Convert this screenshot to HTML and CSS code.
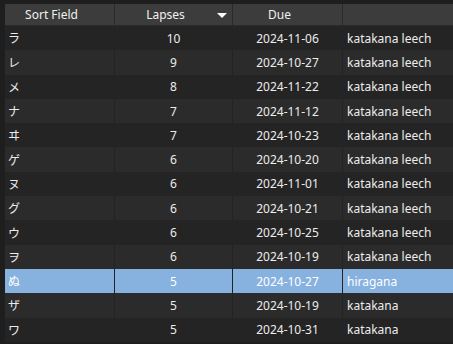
FILE: index.html
```html
<!DOCTYPE html>
<html lang="ja">
<head>
  <meta charset="UTF-8" />
  <title>Browse</title>
  <link rel="stylesheet" href="styles.css">
</head>
<body>
  <div class="grid" role="table">
    <div class="row head" role="row">
      <div class="cell c1">Sort Field</div>
      <div class="cell c2 sorted">Lapses</div>
      <div class="cell c3">Due</div>
      <div class="cell c4"></div>
    </div>
    <div class="row"><div class="cell c1">ラ</div><div class="cell c2">10</div><div class="cell c3">2024-11-06</div><div class="cell c4">katakana leech</div></div>
    <div class="row alt"><div class="cell c1">レ</div><div class="cell c2">9</div><div class="cell c3">2024-10-27</div><div class="cell c4">katakana leech</div></div>
    <div class="row"><div class="cell c1">メ</div><div class="cell c2">8</div><div class="cell c3">2024-11-22</div><div class="cell c4">katakana leech</div></div>
    <div class="row alt"><div class="cell c1">ナ</div><div class="cell c2">7</div><div class="cell c3">2024-11-12</div><div class="cell c4">katakana leech</div></div>
    <div class="row"><div class="cell c1">ヰ</div><div class="cell c2">7</div><div class="cell c3">2024-10-23</div><div class="cell c4">katakana leech</div></div>
    <div class="row alt"><div class="cell c1">ゲ</div><div class="cell c2">6</div><div class="cell c3">2024-10-20</div><div class="cell c4">katakana leech</div></div>
    <div class="row"><div class="cell c1">ヌ</div><div class="cell c2">6</div><div class="cell c3">2024-11-01</div><div class="cell c4">katakana leech</div></div>
    <div class="row alt"><div class="cell c1">グ</div><div class="cell c2">6</div><div class="cell c3">2024-10-21</div><div class="cell c4">katakana leech</div></div>
    <div class="row"><div class="cell c1">ウ</div><div class="cell c2">6</div><div class="cell c3">2024-10-25</div><div class="cell c4">katakana leech</div></div>
    <div class="row alt"><div class="cell c1">ヲ</div><div class="cell c2">6</div><div class="cell c3">2024-10-19</div><div class="cell c4">katakana leech</div></div>
    <div class="row selected"><div class="cell c1">ぬ</div><div class="cell c2">5</div><div class="cell c3">2024-10-27</div><div class="cell c4">hiragana</div></div>
    <div class="row alt"><div class="cell c1">ザ</div><div class="cell c2">5</div><div class="cell c3">2024-10-19</div><div class="cell c4">katakana</div></div>
    <div class="row"><div class="cell c1">ワ</div><div class="cell c2">5</div><div class="cell c3">2024-10-31</div><div class="cell c4">katakana</div></div>
  </div>
</body>
</html>
```

FILE: styles.css
```css
html, body {
  background: #1e1e1e;
}
body {
  margin: 0;
  padding: 4px 0 0 5px;
  font-family: "Noto Sans", "Noto Sans CJK JP", sans-serif;
  font-size: 12px;
  color: #ececec;
  overflow: hidden;
}
.grid {
  display: flex;
  flex-direction: column;
}
.row {
  display: grid;
  grid-template-columns: 110px 118px 110px 1fr;
  height: 24.3px;
  background: #242424;
}
.row.alt {
  background: #2b2b2b;
}
.row.selected {
  background: #87b1df;
  color: #ffffff;
}
.cell {
  display: flex;
  align-items: center;
  border-right: 1px solid #232323;
  white-space: nowrap;
  overflow: hidden;
}
.c1 { padding-left: 3px; }
.c2, .c3 { justify-content: center; }
.c4 { padding-left: 4px; border-right: none; }

.head {
  height: 22px;
  background: #3c3c3c;
  border-bottom: 1px solid #2a2a2a;
  box-sizing: border-box;
}
.head .cell {
  justify-content: center;
  padding: 0 16px 0 0;
  border-right: 1px solid #2a2a2a;
  color: #f0f0f0;
}
.head .cell.c4 {
  border-right: none;
}
.sorted {
  position: relative;
}
.sorted::after {
  content: "";
  position: absolute;
  right: 5px;
  top: 9px;
  border-left: 5px solid transparent;
  border-right: 5px solid transparent;
  border-top: 5px solid #ffffff;
}
```
